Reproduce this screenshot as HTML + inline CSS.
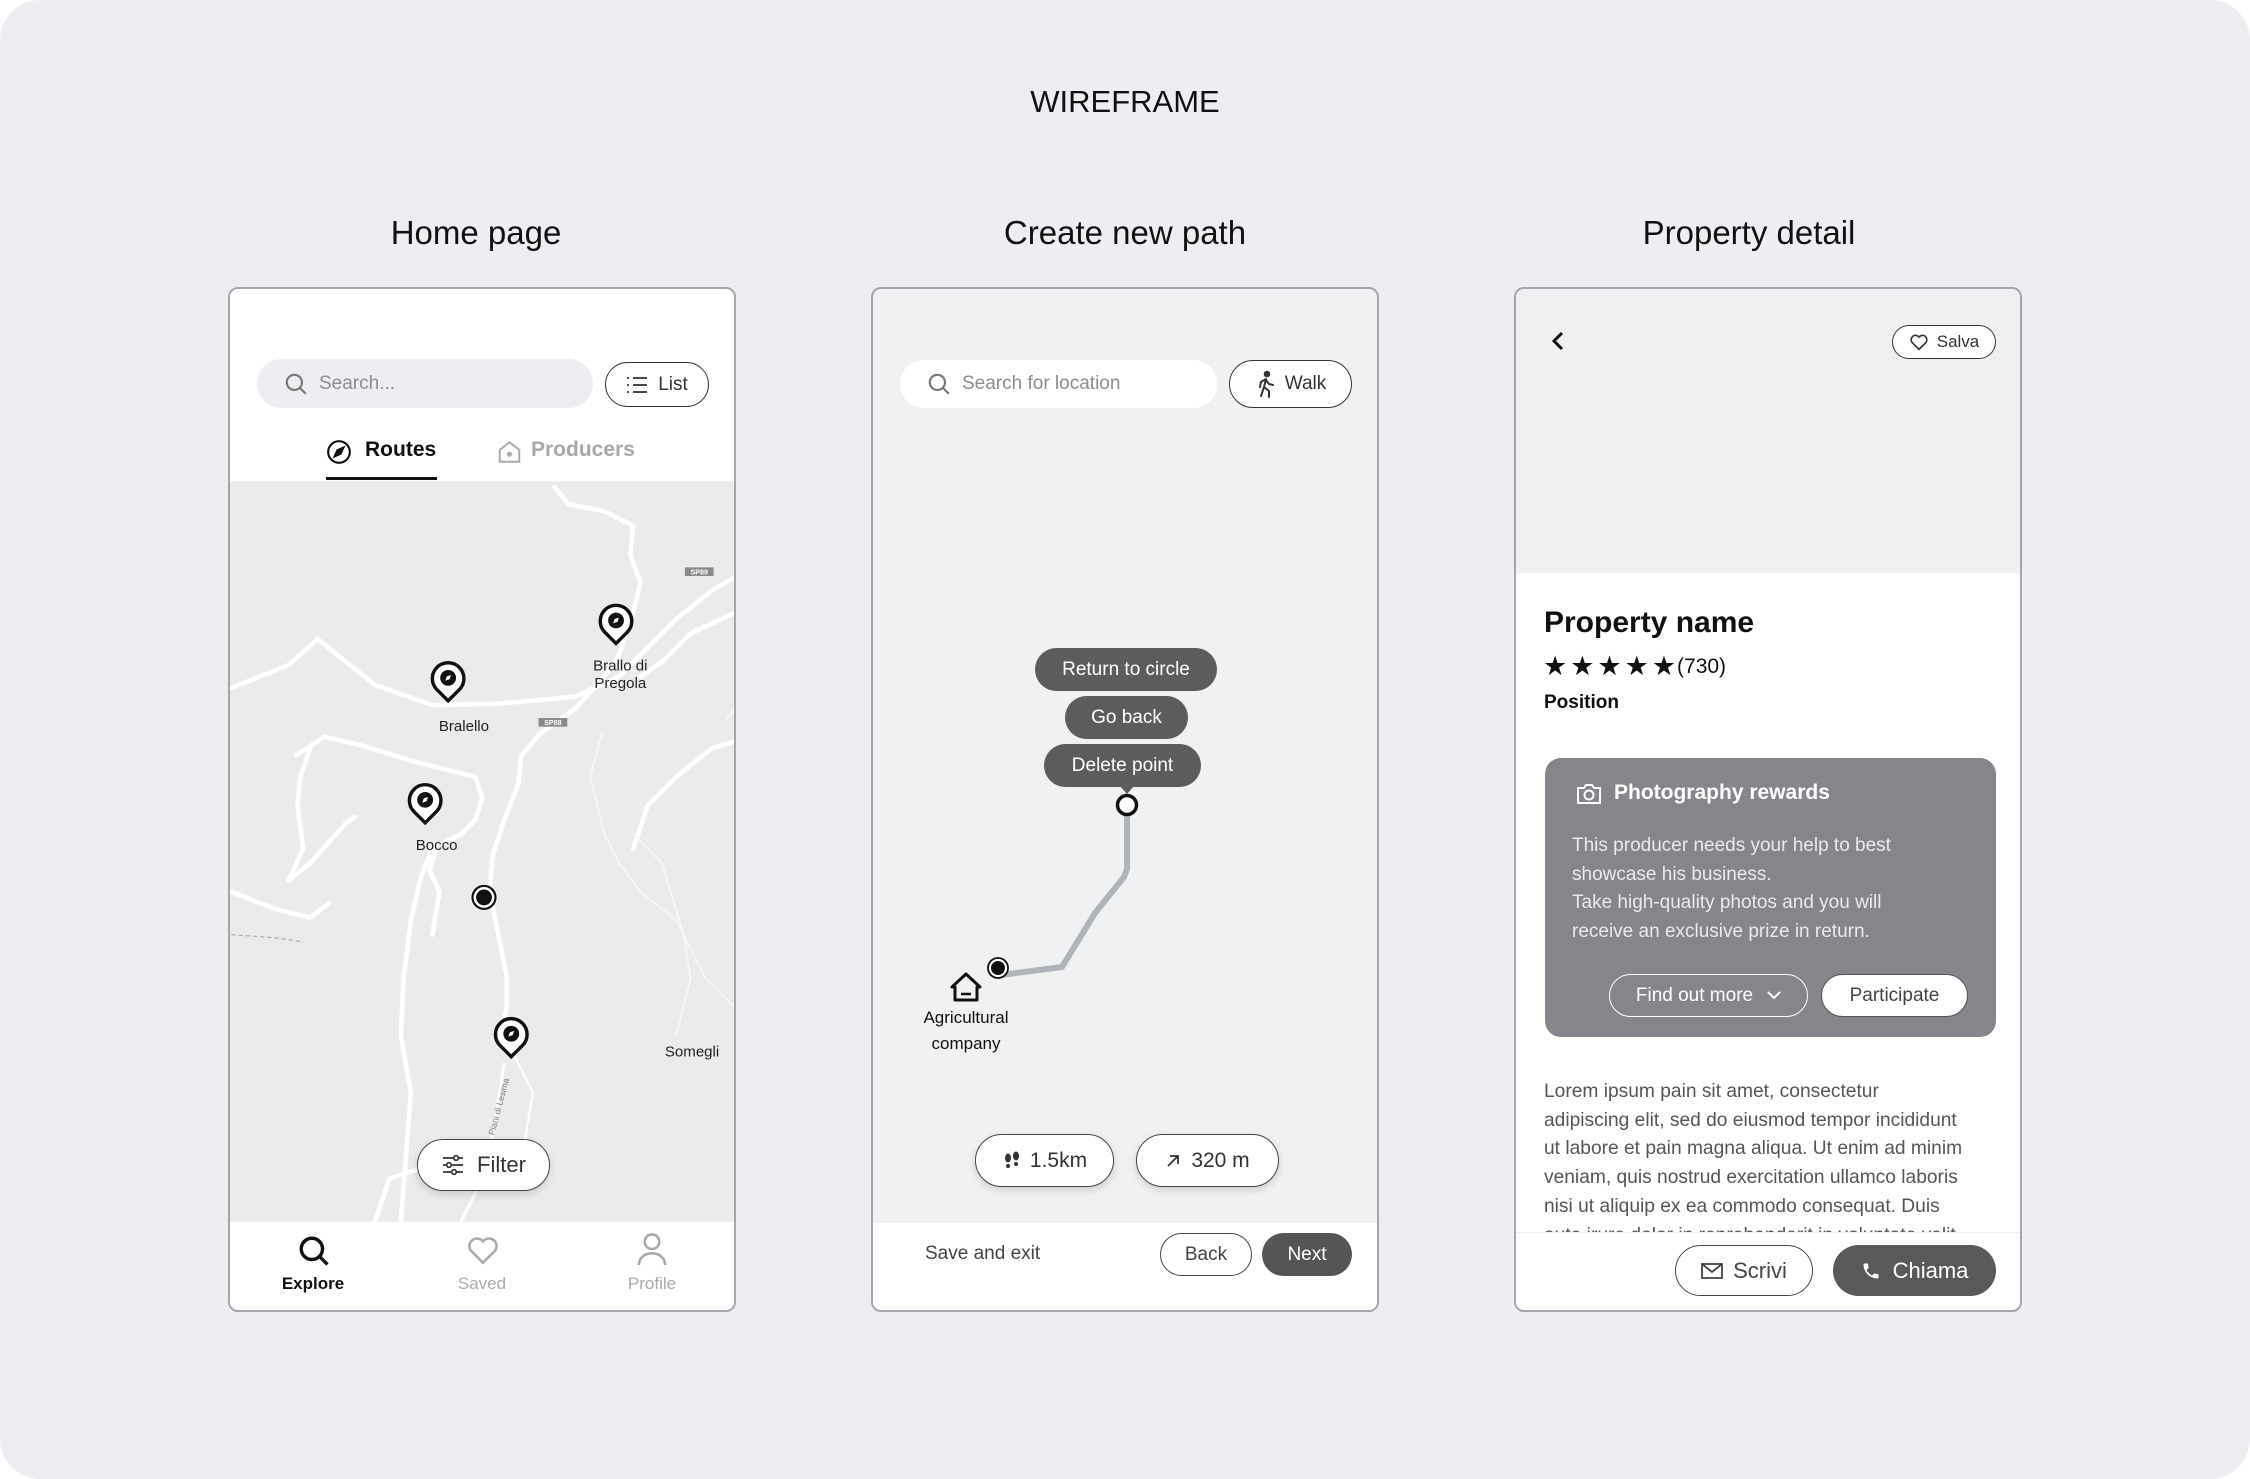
<!DOCTYPE html>
<html><head><meta charset="utf-8">
<style>
*{margin:0;padding:0;box-sizing:border-box}
body{width:2250px;height:1479px;background:#fff;font-family:"Liberation Sans",sans-serif;position:relative;overflow:hidden}
.bg{position:absolute;left:0;top:0;width:2250px;height:1479px;background:#eceef2;border-radius:40px}
.a{position:absolute}
.t{position:absolute;white-space:nowrap}
.phone{position:absolute;top:287px;width:508px;height:1025px;border:2px solid #a3a6ad;border-radius:10px;overflow:hidden;background:#fff}
.pill{position:absolute;border-radius:30px;display:flex;align-items:center;justify-content:center;white-space:nowrap}
</style></head><body>
<div class="bg"></div>
<div class="t" style="left:0;width:2250px;text-align:center;top:84px;font-size:31px;color:#111">WIREFRAME</div>
<div class="t" style="left:226px;width:500px;text-align:center;top:214px;font-size:33px;color:#111">Home page</div>
<div class="t" style="left:875px;width:500px;text-align:center;top:214px;font-size:33px;color:#111">Create new path</div>
<div class="t" style="left:1499px;width:500px;text-align:center;top:214px;font-size:33px;color:#111">Property detail</div>

<!-- HOME -->
<div class="phone" style="left:228px">
  <div class="pill" style="left:27px;top:70px;width:336px;height:49px;background:#eceef1;justify-content:flex-start;padding-left:26px;font-size:19px;color:#8a8c92">
    <svg width="26" height="26" viewBox="0 0 24 24" fill="none" stroke="#777" stroke-width="2"><circle cx="10.5" cy="10.5" r="7"/><path d="M16 16l5 5"/></svg><span style="margin-left:10px">Search...</span></div>
  <div class="pill" style="left:375px;top:73px;width:104px;height:45px;border:1.5px solid #333;font-size:19px;color:#333">
    <svg width="22" height="18" viewBox="0 0 22 18" fill="none" stroke="#333" stroke-width="1.8"><path d="M1 2h2M1 9h2M1 16h2M7 2h14M7 9h14M7 16h14"/></svg><span style="margin-left:10px">List</span></div>
  <svg class="a" style="left:96px;top:150px" width="26" height="26" viewBox="0 0 24 24" fill="none" stroke="#111" stroke-width="2"><circle cx="12" cy="12" r="10"/><path d="M16 8l-2.5 5.5L8 16l2.5-5.5z" fill="#111"/></svg>
  <div class="t" style="left:135px;top:149px;font-size:21px;font-weight:bold;color:#111">Routes</div>
  <div class="a" style="left:96px;top:188px;width:111px;height:3px;background:#111"></div>
  <svg class="a" style="left:266px;top:150px" width="27" height="26" viewBox="0 0 24 24" fill="none" stroke="#aaa" stroke-width="1.8"><path d="M3 10l9-7 9 7v11H3z"/><circle cx="12" cy="14" r="1.5" fill="#aaa"/></svg>
  <div class="t" style="left:301px;top:149px;font-size:21px;font-weight:bold;color:#a8a8a8">Producers</div>
  <!-- map -->
  <svg class="a" style="left:0;top:192px" width="508" height="741" viewBox="159 334 354 516">
    <rect x="159" y="334" width="354" height="516" fill="#ebebeb"/>
    <g fill="none" stroke="#fff" stroke-width="3.2" stroke-linejoin="round" stroke-linecap="round">
      <path d="M160,478 L180,470 L200,462 L220,444 L240,460 L260,476 L300,490 L345,489 L380,486 L400,484 L430,470 L445,455 L470,430 L495,410 L512,400"/>
      <path d="M385,338 L395,350 L420,355 L440,365 L438,385 L445,405 L440,425 L430,455 L420,470 L400,492 L375,510 L362,525 L360,545 L350,570 L342,595 L340,620 L346,650 L352,680 L352,700 L346,725"/>
      <path d="M205,525 L225,512 L250,518 L290,530 L330,540 L335,555 L330,570 L320,580 L300,590"/>
      <path d="M215,520 L208,540 L206,560 L210,590 L200,612 L215,600 L240,572 L246,568"/>
      <path d="M160,620 L190,632 L215,638 L228,628"/>
      <path d="M300,590 L292,610 L285,640 L280,680 L278,720 L285,760 L282,800 L278,850"/>
      <path d="M303,590 L298,605 L305,620 L300,650"/>
      <path d="M512,515 L495,520 L470,540 L450,560 L440,590"/>
      <path d="M512,425 L480,440 L460,460 L445,470"/>
      <path d="M350,740 L345,770 L340,800 L330,830 L320,850" stroke-width="2"/>
      <path d="M260,850 L270,820 L300,810 L330,810"/>
      <path d="M350,720 L360,740 L370,760 L365,790 L360,820" stroke-width="1.4"/>
    </g>
    <g fill="none" stroke="#f7f7f7" stroke-width="1.2">
      <path d="M418,510 L410,540 L420,580 L430,600 L445,620 L470,640 L490,680 L510,700"/>
      <path d="M440,580 L460,600 L475,650 L480,680 L470,720"/>
      <path d="M520,480 L505,500"/>
    </g>
    <path d="M160,650 L190,652 L210,655" stroke="#aaa" stroke-width="0.8" stroke-dasharray="3 2" fill="none"/>
    <rect x="476" y="394" width="20" height="6" fill="#8a8a8a"/><text x="486" y="399" font-size="5" fill="#fff" text-anchor="middle" font-family="Liberation Sans" font-weight="bold">SP89</text>
    <rect x="374" y="499" width="20" height="6" fill="#8a8a8a"/><text x="384" y="504" font-size="5" fill="#fff" text-anchor="middle" font-family="Liberation Sans" font-weight="bold">SP88</text>
    <g font-family="Liberation Sans" font-size="10.5" fill="#222" text-anchor="middle">
      <text x="322" y="508">Bralello</text>
      <text x="431" y="466">Brallo di</text><text x="431" y="478">Pregola</text>
      <text x="303" y="591">Bocco</text>
      <text x="481" y="735">Somegli</text>
    </g>
    <text x="0" y="0" font-family="Liberation Sans" font-size="6" fill="#777" transform="translate(343,790) rotate(-75)">Piani di Lesima</text>
    <g stroke="#111" stroke-width="2.4" fill="#fff">
      <path d="M311,487 L303,479 A11,11 0 1 1 319,479 Z"/>
      <path d="M428,447 L420,439 A11,11 0 1 1 436,439 Z"/>
      <path d="M295,572 L287,564 A11,11 0 1 1 303,564 Z"/>
      <path d="M355,735 L347,727 A11,11 0 1 1 363,727 Z"/>
    </g>
    <g fill="#111"><circle cx="311" cy="471" r="5.5"/><circle cx="428" cy="431" r="5.5"/><circle cx="295" cy="556" r="5.5"/><circle cx="355" cy="719" r="5.5"/></g>
    <g fill="#fff"><path d="M313,469 L312,472 L309,473 L310,470Z"/><path d="M430,429 L429,432 L426,433 L427,430Z"/><path d="M297,554 L296,557 L293,558 L294,555Z"/><path d="M357,717 L356,720 L353,721 L354,718Z"/></g>
    <circle cx="336" cy="624" r="8" fill="#fff" stroke="#111" stroke-width="1.5"/><circle cx="336" cy="624" r="5.5" fill="#111"/>
  </svg>
  <div class="pill" style="left:187px;top:850px;width:133px;height:52px;background:#fff;border:1.5px solid #444;box-shadow:0 3px 8px rgba(0,0,0,.15);font-size:22px;color:#333">
    <svg width="24" height="22" viewBox="0 0 24 22" fill="none" stroke="#333" stroke-width="1.7"><path d="M2 4h20M2 11h20M2 18h20"/><circle cx="15" cy="4" r="2.3" fill="#fff"/><circle cx="8" cy="11" r="2.3" fill="#fff"/><circle cx="13" cy="18" r="2.3" fill="#fff"/></svg><span style="margin-left:12px">Filter</span></div>
  <div class="a" style="left:0;top:933px;width:508px;height:92px;background:#fff"></div>
  <svg class="a" style="left:67px;top:945px" width="34" height="34" viewBox="0 0 24 24" fill="none" stroke="#111" stroke-width="2.4"><circle cx="10.5" cy="10.5" r="7.5"/><path d="M16 16l5.5 5.5"/></svg>
  <div class="t" style="left:33px;width:100px;text-align:center;top:985px;font-size:17px;font-weight:bold;color:#111">Explore</div>
  <svg class="a" style="left:236px;top:945px" width="34" height="32" viewBox="0 0 24 22" fill="none" stroke="#aaa" stroke-width="1.8"><path d="M12 20L3.5 11.5A5 5 0 0 1 12 5a5 5 0 0 1 8.5 6.5z"/></svg>
  <div class="t" style="left:202px;width:100px;text-align:center;top:985px;font-size:17px;color:#aaa">Saved</div>
  <svg class="a" style="left:406px;top:942px" width="32" height="36" viewBox="0 0 22 24" fill="none" stroke="#aaa" stroke-width="1.8"><circle cx="11" cy="7" r="5"/><path d="M2 23c0-5 4-8 9-8s9 3 9 8"/></svg>
  <div class="t" style="left:372px;width:100px;text-align:center;top:985px;font-size:17px;color:#aaa">Profile</div>
</div>

<!-- CREATE PATH -->
<div class="phone" style="left:871px;background:#f0f1f3">
  <div class="pill" style="left:27px;top:71px;width:317px;height:48px;background:#fff;justify-content:flex-start;padding-left:26px;font-size:19px;color:#8a8c92">
    <svg width="26" height="26" viewBox="0 0 24 24" fill="none" stroke="#777" stroke-width="2"><circle cx="10.5" cy="10.5" r="7"/><path d="M16 16l5 5"/></svg><span style="margin-left:10px">Search for location</span></div>
  <div class="pill" style="left:356px;top:71px;width:123px;height:48px;border:1.5px solid #333;font-size:19px;color:#333;background:#fff">
    <svg width="22" height="28" viewBox="0 0 22 28" fill="none" stroke="#333" stroke-width="2" stroke-linecap="round" stroke-linejoin="round"><circle cx="12" cy="4" r="2.3" fill="#333"/><path d="M11 9l-2 8 5 4v6M9 17l-3 9M11 9l-5 3-1 5M11 10l3 4 4 1"/></svg><span style="margin-left:8px">Walk</span></div>
  <svg class="a" style="left:0;top:0" width="508" height="1025">
    <polyline points="254,527 254,580 251,588 222,624 189,678 128,686" fill="none" stroke="#b1b3ba" stroke-width="6" stroke-linejoin="miter"/>
    <circle cx="254" cy="516" r="9.5" fill="#fff" stroke="#111" stroke-width="3.5"/>
    <circle cx="125" cy="679" r="10" fill="#fff" stroke="#111" stroke-width="1.8"/><circle cx="125" cy="679" r="7" fill="#111"/>
    <path d="M93,685 L107,698 L104,698 L104,711 L82,711 L82,698 L79,698 Z" fill="none" stroke="#111" stroke-width="3" stroke-linejoin="round"/>
    <path d="M88,705 L98,705" stroke="#111" stroke-width="2.5"/>
    <path d="M246,496 L262,496 L254,505 Z" fill="#5c5c5c"/>
  </svg>
  <div class="pill" style="left:162px;top:359px;width:182px;height:43px;background:#5c5c5c;color:#fff;font-size:19px">Return to circle</div>
  <div class="pill" style="left:192px;top:407px;width:123px;height:43px;background:#5c5c5c;color:#fff;font-size:19px">Go back</div>
  <div class="pill" style="left:171px;top:455px;width:157px;height:43px;background:#5c5c5c;color:#fff;font-size:19px">Delete point</div>
  <div class="t" style="left:43px;width:100px;text-align:center;top:716px;font-size:17px;color:#111;line-height:26px">Agricultural<br>company</div>
  <div class="pill" style="left:102px;top:845px;width:139px;height:53px;background:#fff;border:1.5px solid #444;box-shadow:0 3px 8px rgba(0,0,0,.15);font-size:21px;color:#333">
    <svg width="20" height="20" viewBox="0 0 20 20" fill="#333"><ellipse cx="6" cy="7" rx="3" ry="4.5"/><ellipse cx="14" cy="5" rx="3" ry="4.5"/><circle cx="6" cy="15" r="2"/><circle cx="14" cy="13" r="2"/></svg><span style="margin-left:8px">1.5km</span></div>
  <div class="pill" style="left:263px;top:845px;width:143px;height:53px;background:#fff;border:1.5px solid #444;box-shadow:0 3px 8px rgba(0,0,0,.15);font-size:21px;color:#333">
    <svg width="16" height="16" viewBox="0 0 16 16" fill="none" stroke="#333" stroke-width="1.8"><path d="M3 13L13 3M5 3h8v8"/></svg><span style="margin-left:10px">320 m</span></div>
  <div class="a" style="left:0;top:934px;width:508px;height:91px;background:#fff"></div>
  <div class="t" style="left:52px;top:954px;font-size:19px;color:#444">Save and exit</div>
  <div class="pill" style="left:287px;top:944px;width:92px;height:43px;border:1.5px solid #444;font-size:19px;color:#444;background:#fff">Back</div>
  <div class="pill" style="left:389px;top:944px;width:90px;height:43px;background:#555;font-size:19px;color:#fff">Next</div>
</div>

<!-- PROPERTY -->
<div class="phone" style="left:1514px">
  <div class="a" style="left:0;top:0;width:508px;height:284px;background:#eff0f2"></div>
  <svg class="a" style="left:33px;top:41px" width="18" height="22" viewBox="0 0 18 22" fill="none" stroke="#111" stroke-width="3"><path d="M13 3L5 11l8 8"/></svg>
  <div class="pill" style="left:376px;top:36px;width:104px;height:34px;border:1.5px solid #333;font-size:17px;color:#333;background:#fff">
    <svg width="20" height="18" viewBox="0 0 24 22" fill="none" stroke="#333" stroke-width="2"><path d="M12 20L3.5 11.5A5 5 0 0 1 12 5a5 5 0 0 1 8.5 6.5z"/></svg><span style="margin-left:8px">Salva</span></div>
  <div class="t" style="left:28px;top:317px;font-size:30px;font-weight:bold;color:#111">Property name</div>
  <div class="t" style="left:27px;top:362px;font-size:27px;color:#111;letter-spacing:3px">★★★★★<span style="font-size:21px;letter-spacing:0;margin-left:-2px;vertical-align:2px">(730)</span></div>
  <div class="t" style="left:28px;top:403px;font-size:19px;font-weight:bold;color:#111">Position</div>
  <div class="a" style="left:29px;top:469px;width:451px;height:279px;background:#85868b;border-radius:16px"></div>
  <svg class="a" style="left:60px;top:494px" width="26" height="22" viewBox="0 0 26 22" fill="none" stroke="#fff" stroke-width="2"><path d="M2 5h6l2-3h6l2 3h6v15H2z"/><circle cx="13" cy="12" r="4.5"/></svg>
  <div class="t" style="left:98px;top:492px;font-size:21px;font-weight:bold;color:#fff">Photography rewards</div>
  <div class="t" style="left:56px;top:543px;font-size:19px;color:#eaeaea;line-height:28.7px">This producer needs your help to best<br>showcase his business.<br>Take high-quality photos and you will<br>receive an exclusive prize in return.</div>
  <div class="pill" style="left:93px;top:685px;width:199px;height:43px;border:1.5px solid #fff;font-size:19px;color:#fff">Find out more<svg style="margin-left:14px" width="14" height="9" viewBox="0 0 14 9" fill="none" stroke="#fff" stroke-width="2"><path d="M1 1l6 6 6-6"/></svg></div>
  <div class="pill" style="left:305px;top:685px;width:147px;height:43px;background:#fff;border:1.5px solid #555;font-size:19px;color:#444">Participate</div>
  <div class="t" style="left:28px;top:789px;font-size:19.2px;color:#555;line-height:28.7px">Lorem ipsum pain sit amet, consectetur<br>adipiscing elit, sed do eiusmod tempor incididunt<br>ut labore et pain magna aliqua. Ut enim ad minim<br>veniam, quis nostrud exercitation ullamco laboris<br>nisi ut aliquip ex ea commodo consequat. Duis<br>aute irure dolor in reprehenderit in voluptate velit</div>
  <div class="a" style="left:0;top:943px;width:508px;height:82px;background:#fff;border-top:1px solid #eee"></div>
  <div class="pill" style="left:159px;top:956px;width:138px;height:51px;border:1.5px solid #444;font-size:22px;color:#444;background:#fff">
    <svg width="22" height="16" viewBox="0 0 22 16" fill="none" stroke="#444" stroke-width="1.8"><rect x="1" y="1" width="20" height="14"/><path d="M1 1l10 8 10-8"/></svg><span style="margin-left:10px">Scrivi</span></div>
  <div class="pill" style="left:317px;top:956px;width:163px;height:51px;background:#595959;font-size:22px;color:#fff">
    <svg width="20" height="20" viewBox="0 0 24 24" fill="#fff"><path d="M6.6 10.8c1.4 2.8 3.8 5.1 6.6 6.6l2.2-2.2c.3-.3.7-.4 1-.2 1.1.4 2.3.6 3.6.6.6 0 1 .4 1 1V20c0 .6-.4 1-1 1C10.6 21 3 13.4 3 4c0-.6.4-1 1-1h3.5c.6 0 1 .4 1 1 0 1.3.2 2.5.6 3.6.1.3 0 .7-.2 1z"/></svg><span style="margin-left:12px">Chiama</span></div>
</div>
</body></html>
